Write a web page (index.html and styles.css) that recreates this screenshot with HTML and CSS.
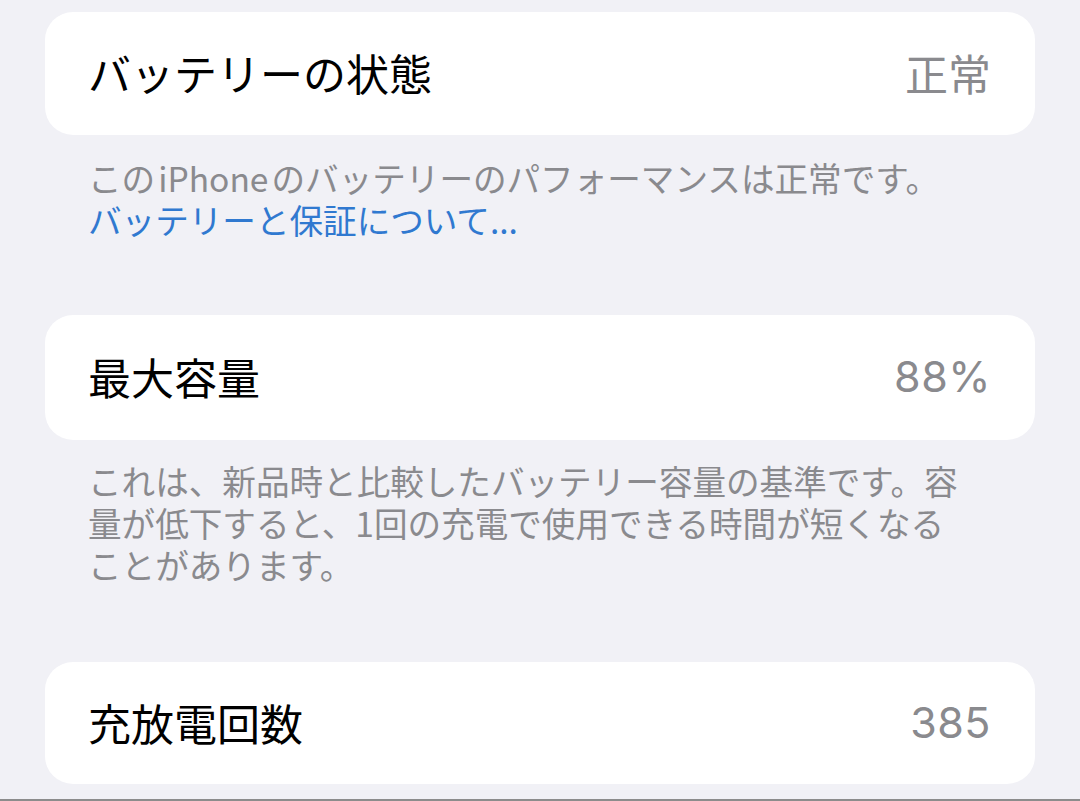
FILE: index.html
```html
<!DOCTYPE html>
<html lang="ja">
<head>
<meta charset="utf-8">
<link rel="stylesheet" href="styles.css">
</head>
<body>
<main class="page">
  <section class="section s1">
    <div class="card">
      <span class="label">バッテリーの状態</span>
      <span class="value">正常</span>
    </div>
    <p class="footer">この<span class="latin">iPhone</span>のバッテリーのパフォーマンスは正常です。<br><a class="link">バッテリーと保証について...</a></p>
  </section>
  <section class="section s2">
    <div class="card">
      <span class="label">最大容量</span>
      <span class="value num">88%</span>
    </div>
    <p class="footer">これは、新品時と比較したバッテリー容量の基準です。容<br>量が低下すると、1回の充電で使用できる時間が短くなる<br>ことがあります。</p>
  </section>
  <section class="section s3">
    <div class="card">
      <span class="label">充放電回数</span>
      <span class="value num">385</span>
    </div>
  </section>
</main>
<div class="bottom-line"></div>
</body>
</html>
```

FILE: styles.css
```css
html, body {
  margin: 0;
  padding: 0;
}
body {
  background: #f1f1f6;
  font-family: "Noto Sans CJK JP", "Noto Sans", sans-serif;
  width: 1080px;
  height: 801px;
  overflow: hidden;
  position: relative;
}
.page {
  display: flex;
  flex-direction: column;
  padding: 12px 45px 0 45px;
}
.card {
  background: #ffffff;
  border-radius: 28px;
  height: 123px;
  display: flex;
  align-items: center;
  justify-content: space-between;
  padding: 0 44px 0 43px;
}
.label {
  font-size: 43px;
  color: #000;
  line-height: 1;
  margin-top: -2px;
}
.value {
  font-size: 43px;
  color: #8a8a8e;
  line-height: 1;
  margin-top: -2px;
}
.value.num {
  font-family: "Inter", "Noto Sans", sans-serif;
  font-size: 43px;
  font-weight: 400;
  letter-spacing: 0.5px;
}
.footer {
  margin: 22px 0 0 0;
  padding: 0 43px;
  font-size: 33.6px;
  line-height: 42px;
  color: #8a8a8e;
  white-space: nowrap;
}
.latin {
  margin: 0 3px;
}
.link {
  color: #3079d0;
}
.s1 .footer {
  margin-bottom: 74px;
}
.s2 .card {
  height: 125px;
}
.s2 .footer {
  margin-top: 20px;
  margin-bottom: 76px;
}
.s3 .card {
  height: 122px;
}
.bottom-line {
  position: absolute;
  left: 0;
  right: 0;
  bottom: 0;
  height: 2px;
  background: #8c8c8c;
}
```
